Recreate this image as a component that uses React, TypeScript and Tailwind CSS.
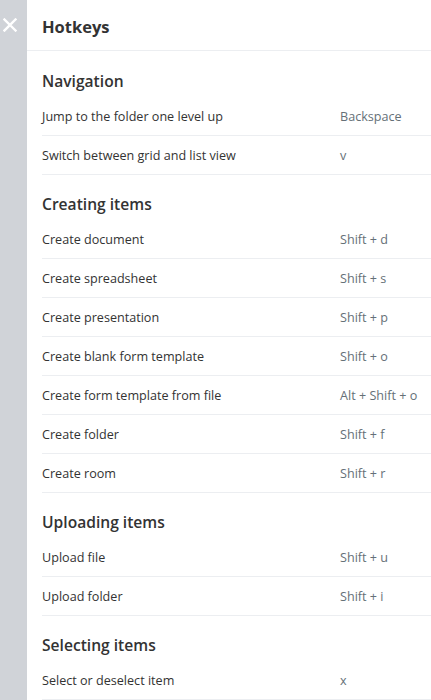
import React from "react";

type Hotkey = { label: string; keys: string };
type Section = { title: string; items: Hotkey[] };

const sections: Section[] = [
  {
    title: "Navigation",
    items: [
      { label: "Jump to the folder one level up", keys: "Backspace" },
      { label: "Switch between grid and list view", keys: "v" },
    ],
  },
  {
    title: "Creating items",
    items: [
      { label: "Create document", keys: "Shift + d" },
      { label: "Create spreadsheet", keys: "Shift + s" },
      { label: "Create presentation", keys: "Shift + p" },
      { label: "Create blank form template", keys: "Shift + o" },
      { label: "Create form template from file", keys: "Alt + Shift + o" },
      { label: "Create folder", keys: "Shift + f" },
      { label: "Create room", keys: "Shift + r" },
    ],
  },
  {
    title: "Uploading items",
    items: [
      { label: "Upload file", keys: "Shift + u" },
      { label: "Upload folder", keys: "Shift + i" },
    ],
  },
  {
    title: "Selecting items",
    items: [{ label: "Select or deselect item", keys: "x" }],
  },
];

const HotkeyRow: React.FC<{ item: Hotkey }> = ({ item }) => (
  <div className="flex h-[39px] items-center border-b border-[#eceef1] pt-[2px]">
    <span className="w-[298px] shrink-0 text-[12.6px] text-[#333333]">{item.label}</span>
    <span className="text-[12.6px] text-[#657077]">{item.keys}</span>
  </div>
);

export default function App() {
  return (
    <div
      className="flex h-[700px] w-[431px] overflow-hidden bg-[#d0d3d8]"
      style={{ fontFamily: '"Open Sans", "Noto Sans", sans-serif' }}
    >
      {/* close strip */}
      <div className="w-[27px] shrink-0 pl-[3px] pt-[18px]">
        <svg width="14" height="14" viewBox="0 0 14 14" fill="none">
          <path d="M1.5 1.5l11 11M12.5 1.5l-11 11" stroke="#ffffff" strokeWidth="2.4" strokeLinecap="square" />
        </svg>
      </div>

      <div className="flex-1 bg-white">
        <div className="flex h-[51px] items-center border-b border-[#eceef1] pl-[15px] pt-[5px]">
          <h1 className="text-[16.5px] font-bold text-[#333333]">Hotkeys</h1>
        </div>

        <div className="pl-[15px] pt-[1px]">
          {sections.map((section) => (
            <div key={section.title}>
              <h2 className="pt-[18px] pb-[5px] text-[15.6px] leading-[22px] font-semibold text-[#333333]">
                {section.title}
              </h2>
              {section.items.map((item) => (
                <HotkeyRow key={item.label} item={item} />
              ))}
            </div>
          ))}
        </div>
      </div>
    </div>
  );
}
